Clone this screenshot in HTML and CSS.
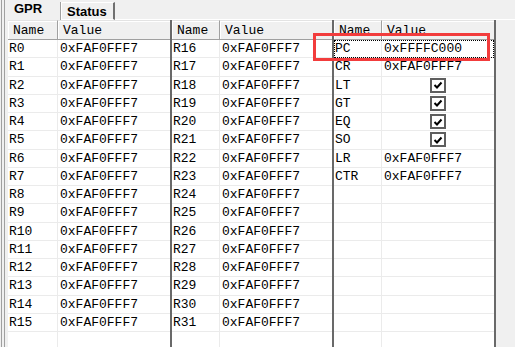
FILE: index.html
```html
<!DOCTYPE html>
<html lang="en">

<head>
    <meta charset="UTF-8">
    <title>Registers</title>
    <link rel="stylesheet" href="styles.css">
</head>

<body>
    <div class="window">
        <div class="frame">
            <div class="tabs">
                <div class="tab active">GPR</div>
                <div class="tab">Status</div>
                <div class="tab-fill"></div>
            </div>

            <div class="grids">
                <!-- R0 - R15 -->
                <div class="grid first">
                    <div class="hd"><span class="name">Name</span><span class="value">Value</span></div>
                    <div class="row"><span class="name">R0</span><span class="value">0xFAF0FFF7</span></div>
                    <div class="row"><span class="name">R1</span><span class="value">0xFAF0FFF7</span></div>
                    <div class="row"><span class="name">R2</span><span class="value">0xFAF0FFF7</span></div>
                    <div class="row"><span class="name">R3</span><span class="value">0xFAF0FFF7</span></div>
                    <div class="row"><span class="name">R4</span><span class="value">0xFAF0FFF7</span></div>
                    <div class="row"><span class="name">R5</span><span class="value">0xFAF0FFF7</span></div>
                    <div class="row"><span class="name">R6</span><span class="value">0xFAF0FFF7</span></div>
                    <div class="row"><span class="name">R7</span><span class="value">0xFAF0FFF7</span></div>
                    <div class="row"><span class="name">R8</span><span class="value">0xFAF0FFF7</span></div>
                    <div class="row"><span class="name">R9</span><span class="value">0xFAF0FFF7</span></div>
                    <div class="row"><span class="name">R10</span><span class="value">0xFAF0FFF7</span></div>
                    <div class="row"><span class="name">R11</span><span class="value">0xFAF0FFF7</span></div>
                    <div class="row"><span class="name">R12</span><span class="value">0xFAF0FFF7</span></div>
                    <div class="row"><span class="name">R13</span><span class="value">0xFAF0FFF7</span></div>
                    <div class="row"><span class="name">R14</span><span class="value">0xFAF0FFF7</span></div>
                    <div class="row"><span class="name">R15</span><span class="value">0xFAF0FFF7</span></div>
                    <div class="row"><span class="name"></span><span class="value"></span></div>
                </div>

                <!-- R16 - R31 -->
                <div class="grid">
                    <div class="hd"><span class="name">Name</span><span class="value">Value</span></div>
                    <div class="row"><span class="name">R16</span><span class="value">0xFAF0FFF7</span></div>
                    <div class="row"><span class="name">R17</span><span class="value">0xFAF0FFF7</span></div>
                    <div class="row"><span class="name">R18</span><span class="value">0xFAF0FFF7</span></div>
                    <div class="row"><span class="name">R19</span><span class="value">0xFAF0FFF7</span></div>
                    <div class="row"><span class="name">R20</span><span class="value">0xFAF0FFF7</span></div>
                    <div class="row"><span class="name">R21</span><span class="value">0xFAF0FFF7</span></div>
                    <div class="row"><span class="name">R22</span><span class="value">0xFAF0FFF7</span></div>
                    <div class="row"><span class="name">R23</span><span class="value">0xFAF0FFF7</span></div>
                    <div class="row"><span class="name">R24</span><span class="value">0xFAF0FFF7</span></div>
                    <div class="row"><span class="name">R25</span><span class="value">0xFAF0FFF7</span></div>
                    <div class="row"><span class="name">R26</span><span class="value">0xFAF0FFF7</span></div>
                    <div class="row"><span class="name">R27</span><span class="value">0xFAF0FFF7</span></div>
                    <div class="row"><span class="name">R28</span><span class="value">0xFAF0FFF7</span></div>
                    <div class="row"><span class="name">R29</span><span class="value">0xFAF0FFF7</span></div>
                    <div class="row"><span class="name">R30</span><span class="value">0xFAF0FFF7</span></div>
                    <div class="row"><span class="name">R31</span><span class="value">0xFAF0FFF7</span></div>
                    <div class="row"><span class="name"></span><span class="value"></span></div>
                </div>

                <!-- special registers -->
                <div class="grid">
                    <div class="hd"><span class="name">Name</span><span class="value">Value</span></div>
                    <div class="row focused"><span class="name">PC</span><span class="value">0xFFFFC000</span></div>
                    <div class="row"><span class="name">CR</span><span class="value">0xFAF0FFF7</span></div>
                    <div class="row"><span class="name">LT</span><span class="value check"><i class="box"><svg viewBox="0 0 10 10" width="10" height="10"><path d="M1.5 5 L4 7.5 L8.5 2.5" fill="none" stroke="#000" stroke-width="2"/></svg></i></span></div>
                    <div class="row"><span class="name">GT</span><span class="value check"><i class="box"><svg viewBox="0 0 10 10" width="10" height="10"><path d="M1.5 5 L4 7.5 L8.5 2.5" fill="none" stroke="#000" stroke-width="2"/></svg></i></span></div>
                    <div class="row"><span class="name">EQ</span><span class="value check"><i class="box"><svg viewBox="0 0 10 10" width="10" height="10"><path d="M1.5 5 L4 7.5 L8.5 2.5" fill="none" stroke="#000" stroke-width="2"/></svg></i></span></div>
                    <div class="row"><span class="name">SO</span><span class="value check"><i class="box"><svg viewBox="0 0 10 10" width="10" height="10"><path d="M1.5 5 L4 7.5 L8.5 2.5" fill="none" stroke="#000" stroke-width="2"/></svg></i></span></div>
                    <div class="row"><span class="name">LR</span><span class="value">0xFAF0FFF7</span></div>
                    <div class="row"><span class="name">CTR</span><span class="value">0xFAF0FFF7</span></div>
                    <div class="row"><span class="name"></span><span class="value"></span></div>
                    <div class="row"><span class="name"></span><span class="value"></span></div>
                    <div class="row"><span class="name"></span><span class="value"></span></div>
                    <div class="row"><span class="name"></span><span class="value"></span></div>
                    <div class="row"><span class="name"></span><span class="value"></span></div>
                    <div class="row"><span class="name"></span><span class="value"></span></div>
                    <div class="row"><span class="name"></span><span class="value"></span></div>
                    <div class="row"><span class="name"></span><span class="value"></span></div>
                    <div class="row"><span class="name"></span><span class="value"></span></div>
                </div>
            </div>
        </div>
    </div>

    <!-- annotation box around PC -->
    <div class="mark"></div>
</body>

</html>
```

FILE: styles.css
```css
body {
    margin: 0;
    background: #f0f0f0;
    height: 347px;
    overflow: hidden;
    position: relative;
    font-family: "Liberation Mono", "Courier New", monospace;
    font-size: 13px;
    color: #000;
}

.window {
    margin-left: 1px;
    border-left: 1px solid #a0a0a0;
    padding-left: 2px;
    height: 347px;
}

.frame {
    border-left: 1px solid #a0a0a0;
    height: 347px;
}

/* tab strip */
.tabs {
    display: flex;
    height: 20px;
}

.tab {
    font-family: "Liberation Sans", Arial, sans-serif;
    font-weight: bold;
    font-size: 13px;
    box-sizing: border-box;
    height: 20px;
}

.tab.active {
    width: 56px;
    padding: 1px 0 0 9px;
}

.tab:not(.active) {
    width: 54px;
    margin-top: 2px;
    height: 18px;
    padding: 1px 0 0 5px;
    border-left: 1px solid #fff;
    border-top: 1px solid #fff;
    border-right: 2px solid #707070;
    box-shadow: -1px 0 0 #a0a0a0;
    border-bottom: 1px solid #fff;
}

.tab-fill {
    flex: 1;
    border-bottom: 1px solid #fff;
}

/* register lists */
.grids {
    display: flex;
    padding-left: 3px;
}

.grid {
    width: 160px;
    background: #fff;
    border-right: 2px solid #696969;
}

.grid.first {
    width: 162px;
}

.hd,
.row {
    display: flex;
}

.name {
    width: 48px;
    flex: none;
    box-sizing: border-box;
    overflow: hidden;
    white-space: nowrap;
}

.first .name {
    width: 50px;
}

.value {
    flex: 1;
    box-sizing: border-box;
    white-space: nowrap;
}

.hd span {
    height: 20px;
    line-height: 19px;
    padding-left: 5px;
    background: #f0f0f0;
    border-top: 1px solid #e3e3e3;
    border-right: 1px solid #a0a0a0;
    border-bottom: 1px solid #a0a0a0;
    box-shadow: inset 1px 1px 0 #fff;
}

.hd .value {
    border-right: none;
}

.row span {
    height: 18.27px;
    line-height: 18px;
    padding-left: 1px;
    border-bottom: 1px solid #ebebeb;
}

.row .value {
    padding-left: 2px;
}

.row .name {
    border-right: 1px solid #ebebeb;
}

.row.focused {
    outline: 1px dotted #000;
    outline-offset: -1px;
}

.row .check {
    display: flex;
    justify-content: center;
    align-items: center;
    padding-left: 0;
}

.box {
    display: flex;
    justify-content: center;
    align-items: center;
    width: 16px;
    height: 15px;
    box-sizing: border-box;
    border: 2px solid #5e5e5e;
    background: #fff;
}

.mark {
    position: absolute;
    left: 313px;
    top: 33px;
    width: 171px;
    height: 22px;
    border: 3px solid #f23c3c;
}
```
